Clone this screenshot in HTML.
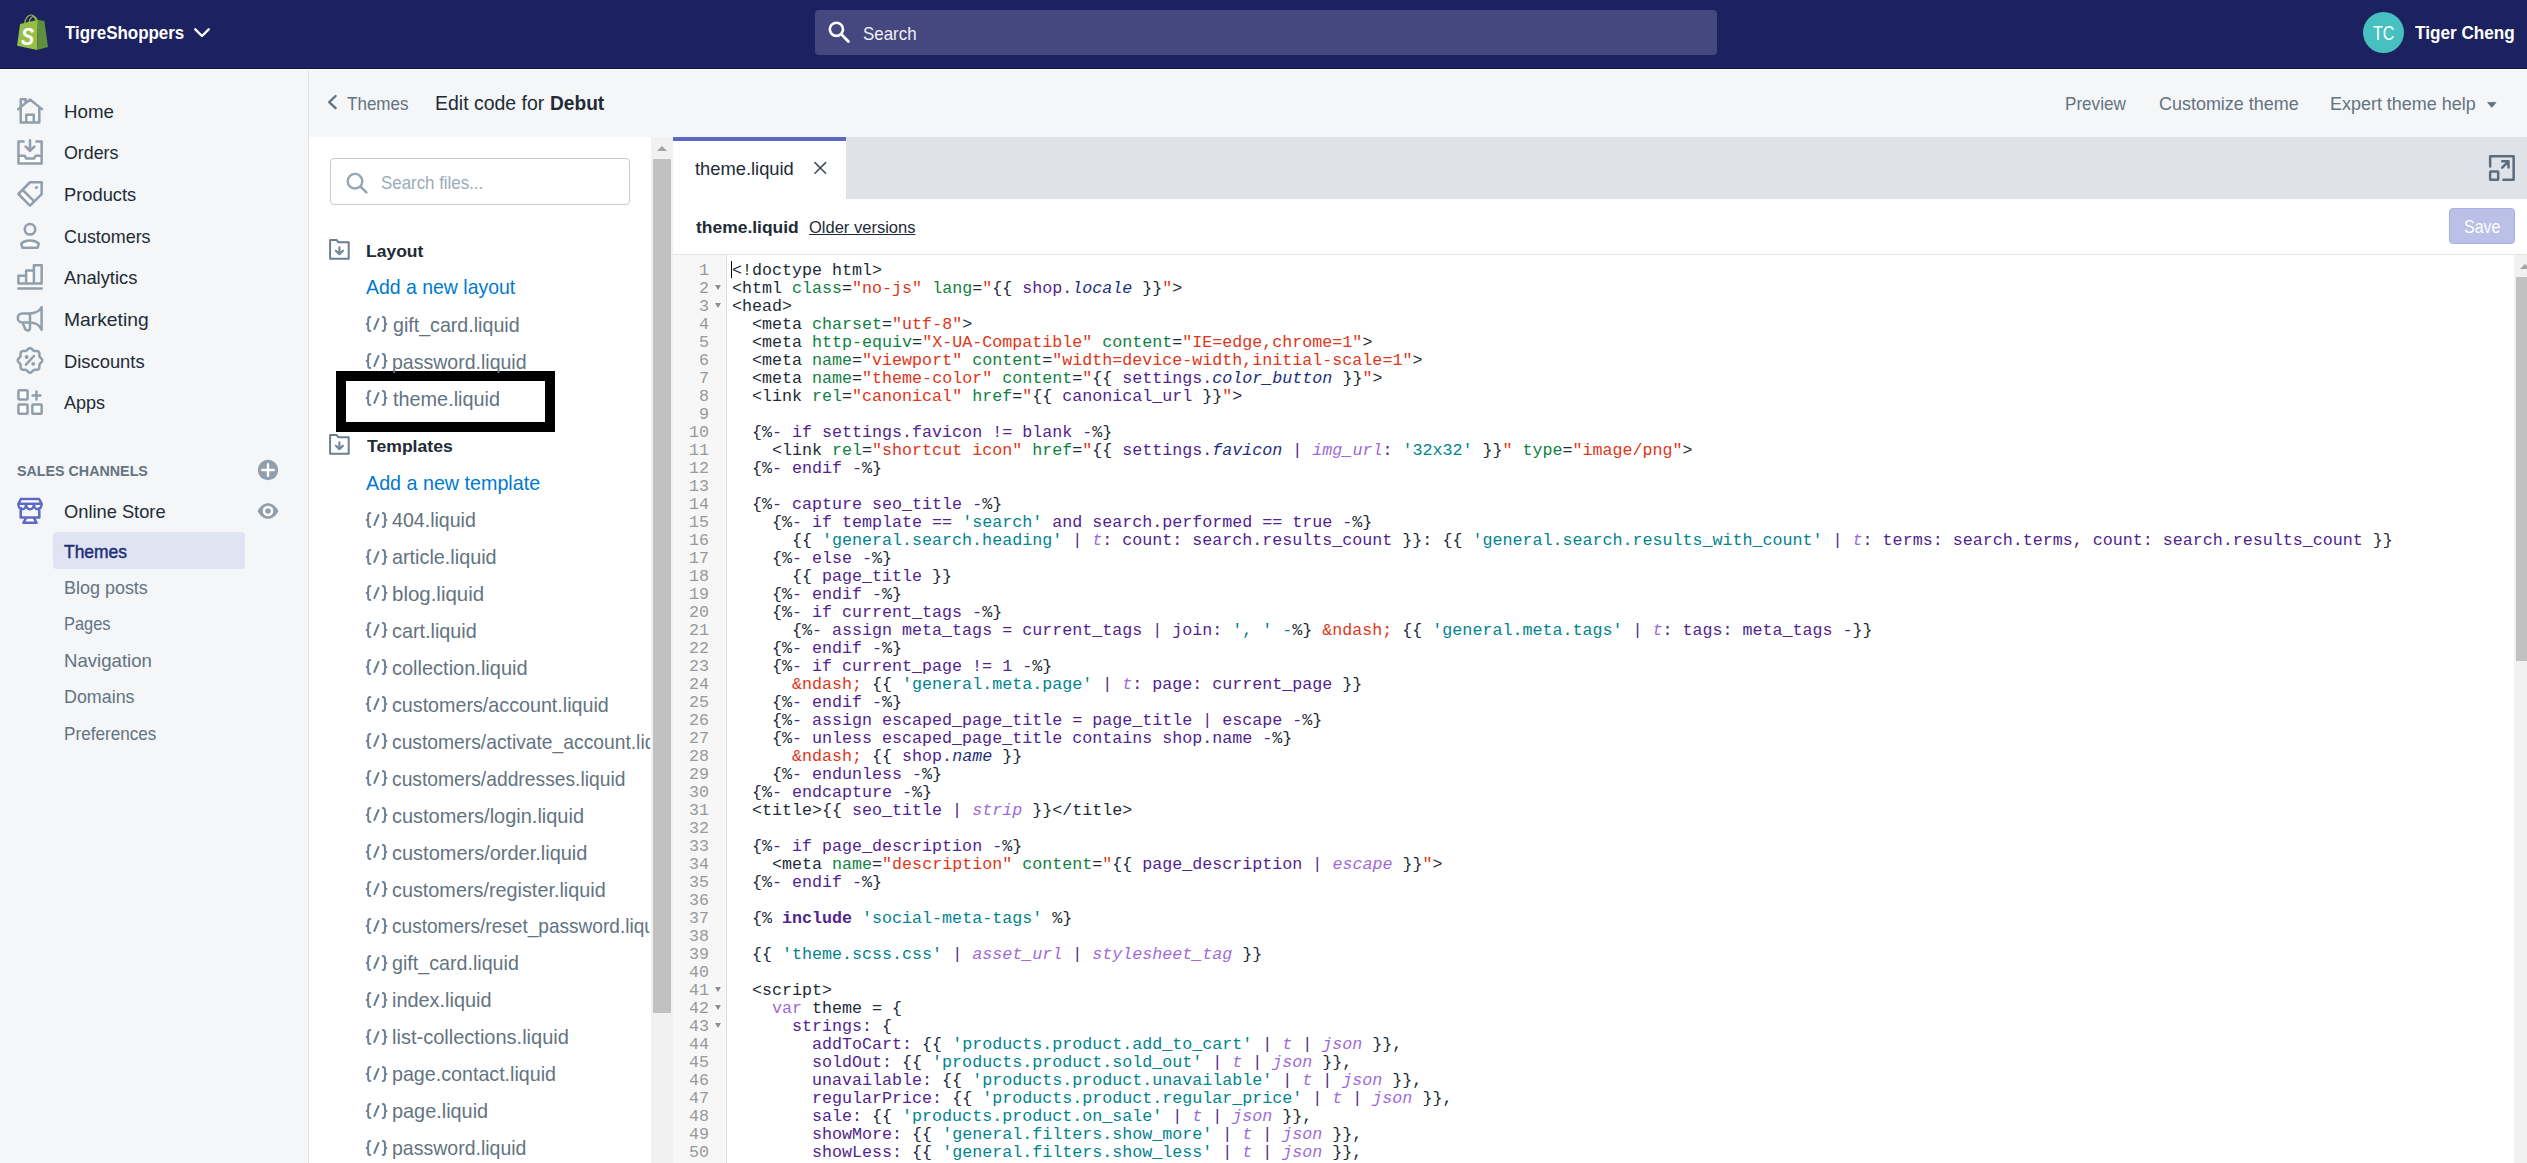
<!DOCTYPE html>
<html lang="en"><head><meta charset="utf-8"><title>TigreShoppers ~ Edit code for Debut</title>
<style>
html,body{margin:0;padding:0}
body{width:2527px;height:1163px;overflow:hidden;position:relative;background:#f4f6f8;font-family:"Liberation Sans", sans-serif;}
.bx{position:absolute}
.t{position:absolute;white-space:nowrap;transform-origin:0 50%;font-family:"Liberation Sans", sans-serif;}
.ic{position:absolute;overflow:visible}
#code{position:absolute;left:732px;top:262px;font-family:"Liberation Mono", monospace;font-size:16.687px;line-height:18px;color:#212b36;white-space:pre;}
#nums{position:absolute;left:673px;top:262px;width:36px;text-align:right;font-family:"Liberation Mono", monospace;font-size:16.687px;line-height:18px;color:#999;}
.cl,.ln{height:18px}
#code i{font-style:normal}
i.a{color:#108043} i.s{color:#de3618} i.l{color:#50248f} i.q{color:#00848e}
#code i.p{color:#202e78;font-style:italic} #code i.f{color:#9c6ade;font-style:italic}
i.v{color:#9c6ade} i.b{color:#50248f;font-weight:700}
.fold{position:absolute;left:715px;width:0;height:0;border-left:3.5px solid transparent;border-right:3.5px solid transparent;border-top:5px solid #8e8e8e}
</style></head><body>

<div class="bx" style="left:0;top:0;width:2527px;height:68px;background:#1c2260"></div>
<div class="bx" style="left:0;top:68px;width:2527px;height:1px;background:#0e1258"></div>
<div class="bx" style="left:0;top:69px;width:2527px;height:1px;background:#fff"></div>
<div class="bx" style="left:815px;top:10px;width:902px;height:45px;background:#45477f;border-radius:4px"></div>
<div class="bx" style="left:2363px;top:12px;width:41px;height:41px;border-radius:50%;background:#47c1bf"></div>
<div class="bx" style="left:308px;top:70px;width:1px;height:1093px;background:#dfe3e8"></div>
<div class="bx" style="left:53px;top:532px;width:192px;height:37px;background:#e0e3f1;border-radius:4px"></div>
<div class="bx" style="left:309px;top:137px;width:342px;height:1026px;background:#fff"></div>
<div class="bx" style="left:651px;top:137px;width:22px;height:1026px;background:#f1f1f1"></div>
<div class="bx" style="left:653px;top:159px;width:18px;height:854px;background:#c1c1c1"></div>
<div class="bx" style="left:657px;top:146px;width:0;height:0;border-left:5px solid transparent;border-right:5px solid transparent;border-bottom:5px solid #a3a3a3"></div>
<div class="bx" style="left:330px;top:158px;width:298px;height:45px;border:1px solid #c4cdd5;border-radius:4px;background:#fff"></div>
<div class="bx" style="left:336px;top:371px;width:199px;height:41px;border:10px solid #000;background:#fff"></div>
<div class="bx" style="left:673px;top:137px;width:1854px;height:62px;background:#dfe3e8"></div>
<div class="bx" style="left:673px;top:137px;width:173px;height:62px;background:#fff"></div>
<div class="bx" style="left:673px;top:137px;width:173px;height:4px;background:#5c6ac4"></div>
<div class="bx" style="left:673px;top:199px;width:1854px;height:55px;background:#fff"></div>
<div class="bx" style="left:673px;top:254px;width:1854px;height:1px;background:#e1e4e8"></div>
<div class="bx" style="left:673px;top:255px;width:1854px;height:908px;background:#fff"></div>
<div class="bx" style="left:673px;top:255px;width:53px;height:908px;background:#f7f7f7;border-right:1px solid #ddd"></div>
<div class="bx" style="left:2449px;top:208px;width:64px;height:34px;border:1px solid #a9b0e0;border-radius:4px;background:#bac0e6"></div>
<div class="bx" style="left:2514px;top:255px;width:13px;height:908px;background:#f1f1f1"></div>
<div class="bx" style="left:2516px;top:277px;width:11px;height:384px;background:#c1c1c1"></div>
<div class="bx" style="left:2520px;top:264px;width:0;height:0;border-left:5px solid transparent;border-right:5px solid transparent;border-bottom:5px solid #a3a3a3"></div>
<div class="bx" style="left:731px;top:261px;width:1px;height:17px;background:#000"></div>

<svg class="ic" style="left:13px;top:94px" width="36" height="36" viewBox="0 0 36 36"><rect x="13.25" y="20.75" width="7.5" height="7.7" fill="#fff" stroke="none"/>
<path fill="none" stroke="#919eab" stroke-width="2.5" stroke-linecap="round" stroke-linejoin="round" d="M7.75 13.5V28.45H26.3V13.5M5.2 15.1L17 5.5L28.9 15.1M7.75 12.6V5.25H12.65V8.3M13.25 28.45V20.75H20.75V28.45"/></svg><svg class="ic" style="left:13px;top:134px" width="36" height="36" viewBox="0 0 36 36"><path d="M5.45 21.7H11.5L13.2 24.5H21L22.7 21.7H28.65V29.55H5.45Z" fill="#fff"/>
<path fill="none" stroke="#919eab" stroke-width="2.5" stroke-linecap="round" stroke-linejoin="round" d="M10.6 7.45H5.45V29.55H28.65V7.45H23.4M5.45 21.7H11.5L13.2 24.5H21L22.7 21.7H28.65M17 6.3V16.2M12.6 12.6L17 16.9L21.4 12.6"/></svg><svg class="ic" style="left:13px;top:176px" width="36" height="36" viewBox="0 0 36 36"><path d="M9.55 13.85L5.4 18L17 29.6L21.2 25.5Z" fill="#fff"/>
<path fill="none" stroke="#919eab" stroke-width="2.5" stroke-linecap="round" stroke-linejoin="round" d="M17 6.25H28.65V18.2L17 29.6L5.4 18ZM9.8 14.1L20.9 25.2"/><circle cx="23.4" cy="11.5" r="1.5" fill="#919eab"/></svg><svg class="ic" style="left:13px;top:218px" width="36" height="36" viewBox="0 0 36 36"><path d="M9.4 29.7L8.2 25.6C13 21.6 21 21.6 25.8 25.6L24.6 29.7Z" fill="#fff"/>
<circle cx="17" cy="11.3" r="5.25" fill="none" stroke="#919eab" stroke-width="2.5" stroke-linecap="round" stroke-linejoin="round"/><path fill="none" stroke="#919eab" stroke-width="2.5" stroke-linecap="round" stroke-linejoin="round" d="M9.4 29.7L8.2 25.6C13 21.6 21 21.6 25.8 25.6L24.6 29.7Z"/></svg><svg class="ic" style="left:13px;top:259px" width="36" height="36" viewBox="0 0 36 36"><rect x="13.15" y="11.45" width="7.75" height="13" fill="#fff"/>
<path fill="none" stroke="#919eab" stroke-width="2.5" stroke-linecap="round" stroke-linejoin="round" d="M5.4 24.45V16.7H13.15V24.45M13.15 16.7V11.45H20.9V24.45M20.9 11.45V6.2H28.65V24.45H5.4M5.45 29.55H28.65"/></svg><svg class="ic" style="left:13px;top:301px" width="36" height="36" viewBox="0 0 36 36"><path fill="none" stroke="#919eab" stroke-width="2.5" stroke-linecap="round" stroke-linejoin="round" d="M28.6 6.3C26.4 10.6 21 12.4 17 12.4H9.3A4.5 4.5 0 0 0 9.3 21.4H17C21 21.4 26.4 23.4 28.6 28.6M28.6 6.3V28.7M17 12.4V27A2.4 2.4 0 0 1 14.6 29.4H14.2C13.2 29.4 12.6 28.9 12.2 28L9.5 21.6"/></svg><svg class="ic" style="left:13px;top:342px" width="36" height="36" viewBox="0 0 36 36"><path fill="none" stroke="#919eab" stroke-width="2.5" stroke-linecap="round" stroke-linejoin="round" d="M17.00 6.15L17.64 6.25L18.25 6.53L18.81 6.95L19.33 7.44L19.80 7.94L20.25 8.38L20.72 8.72L21.22 8.93L21.78 9.02L22.41 9.03L23.10 9.01L23.81 9.02L24.51 9.12L25.14 9.36L25.66 9.74L26.04 10.26L26.28 10.89L26.38 11.59L26.39 12.30L26.37 12.99L26.38 13.62L26.47 14.18L26.68 14.68L27.02 15.15L27.46 15.60L27.96 16.07L28.45 16.59L28.87 17.15L29.15 17.76L29.25 18.40L29.15 19.04L28.87 19.65L28.45 20.21L27.96 20.73L27.46 21.20L27.02 21.65L26.68 22.12L26.47 22.62L26.38 23.18L26.37 23.81L26.39 24.50L26.38 25.21L26.28 25.91L26.04 26.54L25.66 27.06L25.14 27.44L24.51 27.68L23.81 27.78L23.10 27.79L22.41 27.77L21.78 27.78L21.22 27.87L20.72 28.08L20.25 28.42L19.80 28.86L19.33 29.36L18.81 29.85L18.25 30.27L17.64 30.55L17.00 30.65L16.36 30.55L15.75 30.27L15.19 29.85L14.67 29.36L14.20 28.86L13.75 28.42L13.28 28.08L12.78 27.87L12.22 27.78L11.59 27.77L10.90 27.79L10.19 27.78L9.49 27.68L8.86 27.44L8.34 27.06L7.96 26.54L7.72 25.91L7.62 25.21L7.61 24.50L7.63 23.81L7.62 23.18L7.53 22.62L7.32 22.12L6.98 21.65L6.54 21.20L6.04 20.73L5.55 20.21L5.13 19.65L4.85 19.04L4.75 18.40L4.85 17.76L5.13 17.15L5.55 16.59L6.04 16.07L6.54 15.60L6.98 15.15L7.32 14.68L7.53 14.18L7.62 13.62L7.63 12.99L7.61 12.30L7.62 11.59L7.72 10.89L7.96 10.26L8.34 9.74L8.86 9.36L9.49 9.12L10.19 9.02L10.90 9.01L11.59 9.03L12.22 9.02L12.78 8.93L13.28 8.72L13.75 8.38L14.20 7.94L14.67 7.44L15.19 6.95L15.75 6.53L16.36 6.25L17.00 6.15Z"/><path fill="none" stroke="#919eab" stroke-width="2.5" stroke-linecap="round" stroke-linejoin="round" d="M12.9 22.7L21 14"/>
<circle cx="13.6" cy="15" r="1.9" fill="#919eab"/><circle cx="20.2" cy="21.8" r="1.9" fill="#919eab"/></svg><svg class="ic" style="left:13px;top:384px" width="36" height="36" viewBox="0 0 36 36"><g fill="#fff"  stroke="#919eab" stroke-width="2.5" stroke-linecap="round" stroke-linejoin="round"><rect x="5.45" y="6.2" width="9.1" height="9.25" rx="0.8"/><rect x="5.45" y="20.45" width="9.1" height="9.25" rx="0.8"/><rect x="19.35" y="20.45" width="9.3" height="9.25" rx="0.8"/></g>
<path fill="none" stroke="#919eab" stroke-width="2.5" stroke-linecap="round" stroke-linejoin="round" d="M19.6 11.5H27.4M23.45 7.4V15.6"/></svg><svg class="ic" style="left:13px;top:493px" width="36" height="36" viewBox="0 0 36 36"><path d="M7.9 6H26.1L28.7 10.8H5.3Z" fill="#fff"/><path d="M5.3 10.8A3.9 5.5 0 0 0 13.1 10.8A3.9 5.5 0 0 0 20.9 10.8A3.9 5.5 0 0 0 28.7 10.8Z" fill="#fff"/><path d="M13.3 24.5L10.5 29.8H23.5L20.8 24.5Z" fill="#fff"/>
<path fill="none" stroke="#5c6ac4" stroke-width="2.5" stroke-linecap="round" stroke-linejoin="round" d="M7.9 6H26.1L28.7 10.8H5.3ZM5.3 10.8A3.9 5.5 0 0 0 13.1 10.8A3.9 5.5 0 0 0 20.9 10.8A3.9 5.5 0 0 0 28.7 10.8M7.7 15V24.5H26.3V15M13.3 24.7L10.4 29.8H23.6L20.8 24.7"/></svg><svg class="ic" style="left:250px;top:452px" width="36" height="36" viewBox="0 0 36 36"><circle cx="18" cy="18" r="10.2" fill="#919eab"/><path d="M12.2 18H23.8M18 12.2V23.8" stroke="#fff" stroke-width="2.4" stroke-linecap="round"/></svg><svg class="ic" style="left:250px;top:493px" width="36" height="36" viewBox="0 0 36 36"><path d="M7.6 18C10 13 14 10.2 18 10.2S26 13 28.4 18C26 23 22 25.8 18 25.8S10 23 7.6 18Z" fill="#919eab"/><circle cx="18" cy="18" r="5.3" fill="#fff"/><circle cx="18" cy="18" r="2.8" fill="#919eab"/></svg><svg class="ic" style="left:190px;top:24px" width="24" height="18" viewBox="0 0 24 18"><path d="M5.3 5.3L12 12L18.7 5.3" fill="none" stroke="#fff" stroke-width="2.4" stroke-linecap="round" stroke-linejoin="round"/></svg><svg class="ic" style="left:824px;top:17px" width="30" height="30" viewBox="0 0 30 30"><circle cx="12.4" cy="12.3" r="6.6" fill="none" stroke="#fff" stroke-width="2.6"/><path d="M17.3 17.3L24.4 24.4" stroke="#fff" stroke-width="2.8" stroke-linecap="round"/></svg><svg class="ic" style="left:10px;top:8px" width="50" height="50" viewBox="0 0 50 50"><path d="M14.5 15.5C15.5 10 18.5 7 21 7C23.5 7 25 9.5 25.5 12" fill="none" stroke="#95bf47" stroke-width="1.2"/><path d="M18.8 15C19.8 10.8 21.8 8.4 23.8 8.6C25.6 8.8 26.6 10.6 27 12.4" fill="none" stroke="#95bf47" stroke-width="1.2"/>
<path d="M10.1 15.9L27.9 11.8L27.1 41.9L7.1 37.8Z" fill="#95bf47"/><path d="M27.9 11.8L34.4 12.9L38 38.9L27.1 41.9Z" fill="#5e8e3e"/>
<text transform="translate(10.9,36.8) scale(0.8,1)" font-family="Liberation Sans, sans-serif" font-weight="700" font-style="italic" font-size="24.5" fill="#fff">S</text></svg><svg class="ic" style="left:322px;top:90px" width="20" height="24" viewBox="0 0 20 24"><path d="M13.6 6L7.2 12.1L13.6 18.2" fill="none" stroke="#637381" stroke-width="2.3" stroke-linecap="round" stroke-linejoin="round"/></svg><svg class="ic" style="left:2484px;top:99px" width="16" height="12" viewBox="0 0 16 12"><path d="M3.6 3.4H12L7.8 8.4Z" fill="#637381" stroke="#637381" stroke-width="0.8" stroke-linejoin="round"/></svg><svg class="ic" style="left:342px;top:168px" width="30" height="30" viewBox="0 0 30 30"><circle cx="13" cy="13.2" r="7.3" fill="none" stroke="#95a7b7" stroke-width="2.4"/><path d="M18.6 18.8L24.4 24.4" stroke="#95a7b7" stroke-width="2.6" stroke-linecap="round"/></svg><svg class="ic" style="left:322px;top:232px" width="36" height="36" viewBox="0 0 36 36"><path d="M8.1 8H14.5L16.5 10.3H26.7V26.7H8.1Z" fill="none" stroke="#6b7f92" stroke-width="2" stroke-linejoin="round"/><path d="M17.4 15.4V22M13.9 18.7L17.4 22.2L20.9 18.7" fill="none" stroke="#7488a0" stroke-width="2.2" stroke-linecap="round" stroke-linejoin="round"/></svg><svg class="ic" style="left:322px;top:427px" width="36" height="36" viewBox="0 0 36 36"><path d="M8.1 8H14.5L16.5 10.3H26.7V26.7H8.1Z" fill="none" stroke="#6b7f92" stroke-width="2" stroke-linejoin="round"/><path d="M17.4 15.4V22M13.9 18.7L17.4 22.2L20.9 18.7" fill="none" stroke="#7488a0" stroke-width="2.2" stroke-linecap="round" stroke-linejoin="round"/></svg><svg class="ic" style="left:360px;top:308.0px" width="34" height="32" viewBox="0 0 34 32"><g fill="none" stroke="#6b7f92" stroke-width="2" stroke-linecap="round" stroke-linejoin="round"><path d="M10.3 9C8.5 9 8.2 10 8.2 11.5V14C8.2 15.3 7.6 15.9 6.7 15.9C7.6 15.9 8.2 16.5 8.2 17.8V20.5C8.2 22 8.5 23 10.3 23"/><path d="M22.8 9C24.6 9 24.9 10 24.9 11.5V14C24.9 15.3 25.5 15.9 26.4 15.9C25.5 15.9 24.9 16.5 24.9 17.8V20.5C24.9 22 24.6 23 22.8 23"/><path d="M14.3 21L18.5 11"/></g></svg><svg class="ic" style="left:360px;top:345.2px" width="34" height="32" viewBox="0 0 34 32"><g fill="none" stroke="#6b7f92" stroke-width="2" stroke-linecap="round" stroke-linejoin="round"><path d="M10.3 9C8.5 9 8.2 10 8.2 11.5V14C8.2 15.3 7.6 15.9 6.7 15.9C7.6 15.9 8.2 16.5 8.2 17.8V20.5C8.2 22 8.5 23 10.3 23"/><path d="M22.8 9C24.6 9 24.9 10 24.9 11.5V14C24.9 15.3 25.5 15.9 26.4 15.9C25.5 15.9 24.9 16.5 24.9 17.8V20.5C24.9 22 24.6 23 22.8 23"/><path d="M14.3 21L18.5 11"/></g></svg><svg class="ic" style="left:360px;top:382.4px" width="34" height="32" viewBox="0 0 34 32"><g fill="none" stroke="#6b7f92" stroke-width="2" stroke-linecap="round" stroke-linejoin="round"><path d="M10.3 9C8.5 9 8.2 10 8.2 11.5V14C8.2 15.3 7.6 15.9 6.7 15.9C7.6 15.9 8.2 16.5 8.2 17.8V20.5C8.2 22 8.5 23 10.3 23"/><path d="M22.8 9C24.6 9 24.9 10 24.9 11.5V14C24.9 15.3 25.5 15.9 26.4 15.9C25.5 15.9 24.9 16.5 24.9 17.8V20.5C24.9 22 24.6 23 22.8 23"/><path d="M14.3 21L18.5 11"/></g></svg><svg class="ic" style="left:360px;top:503.6px" width="34" height="32" viewBox="0 0 34 32"><g fill="none" stroke="#6b7f92" stroke-width="2" stroke-linecap="round" stroke-linejoin="round"><path d="M10.3 9C8.5 9 8.2 10 8.2 11.5V14C8.2 15.3 7.6 15.9 6.7 15.9C7.6 15.9 8.2 16.5 8.2 17.8V20.5C8.2 22 8.5 23 10.3 23"/><path d="M22.8 9C24.6 9 24.9 10 24.9 11.5V14C24.9 15.3 25.5 15.9 26.4 15.9C25.5 15.9 24.9 16.5 24.9 17.8V20.5C24.9 22 24.6 23 22.8 23"/><path d="M14.3 21L18.5 11"/></g></svg><svg class="ic" style="left:360px;top:540.54px" width="34" height="32" viewBox="0 0 34 32"><g fill="none" stroke="#6b7f92" stroke-width="2" stroke-linecap="round" stroke-linejoin="round"><path d="M10.3 9C8.5 9 8.2 10 8.2 11.5V14C8.2 15.3 7.6 15.9 6.7 15.9C7.6 15.9 8.2 16.5 8.2 17.8V20.5C8.2 22 8.5 23 10.3 23"/><path d="M22.8 9C24.6 9 24.9 10 24.9 11.5V14C24.9 15.3 25.5 15.9 26.4 15.9C25.5 15.9 24.9 16.5 24.9 17.8V20.5C24.9 22 24.6 23 22.8 23"/><path d="M14.3 21L18.5 11"/></g></svg><svg class="ic" style="left:360px;top:577.48px" width="34" height="32" viewBox="0 0 34 32"><g fill="none" stroke="#6b7f92" stroke-width="2" stroke-linecap="round" stroke-linejoin="round"><path d="M10.3 9C8.5 9 8.2 10 8.2 11.5V14C8.2 15.3 7.6 15.9 6.7 15.9C7.6 15.9 8.2 16.5 8.2 17.8V20.5C8.2 22 8.5 23 10.3 23"/><path d="M22.8 9C24.6 9 24.9 10 24.9 11.5V14C24.9 15.3 25.5 15.9 26.4 15.9C25.5 15.9 24.9 16.5 24.9 17.8V20.5C24.9 22 24.6 23 22.8 23"/><path d="M14.3 21L18.5 11"/></g></svg><svg class="ic" style="left:360px;top:614.42px" width="34" height="32" viewBox="0 0 34 32"><g fill="none" stroke="#6b7f92" stroke-width="2" stroke-linecap="round" stroke-linejoin="round"><path d="M10.3 9C8.5 9 8.2 10 8.2 11.5V14C8.2 15.3 7.6 15.9 6.7 15.9C7.6 15.9 8.2 16.5 8.2 17.8V20.5C8.2 22 8.5 23 10.3 23"/><path d="M22.8 9C24.6 9 24.9 10 24.9 11.5V14C24.9 15.3 25.5 15.9 26.4 15.9C25.5 15.9 24.9 16.5 24.9 17.8V20.5C24.9 22 24.6 23 22.8 23"/><path d="M14.3 21L18.5 11"/></g></svg><svg class="ic" style="left:360px;top:651.36px" width="34" height="32" viewBox="0 0 34 32"><g fill="none" stroke="#6b7f92" stroke-width="2" stroke-linecap="round" stroke-linejoin="round"><path d="M10.3 9C8.5 9 8.2 10 8.2 11.5V14C8.2 15.3 7.6 15.9 6.7 15.9C7.6 15.9 8.2 16.5 8.2 17.8V20.5C8.2 22 8.5 23 10.3 23"/><path d="M22.8 9C24.6 9 24.9 10 24.9 11.5V14C24.9 15.3 25.5 15.9 26.4 15.9C25.5 15.9 24.9 16.5 24.9 17.8V20.5C24.9 22 24.6 23 22.8 23"/><path d="M14.3 21L18.5 11"/></g></svg><svg class="ic" style="left:360px;top:688.3px" width="34" height="32" viewBox="0 0 34 32"><g fill="none" stroke="#6b7f92" stroke-width="2" stroke-linecap="round" stroke-linejoin="round"><path d="M10.3 9C8.5 9 8.2 10 8.2 11.5V14C8.2 15.3 7.6 15.9 6.7 15.9C7.6 15.9 8.2 16.5 8.2 17.8V20.5C8.2 22 8.5 23 10.3 23"/><path d="M22.8 9C24.6 9 24.9 10 24.9 11.5V14C24.9 15.3 25.5 15.9 26.4 15.9C25.5 15.9 24.9 16.5 24.9 17.8V20.5C24.9 22 24.6 23 22.8 23"/><path d="M14.3 21L18.5 11"/></g></svg><svg class="ic" style="left:360px;top:725.24px" width="34" height="32" viewBox="0 0 34 32"><g fill="none" stroke="#6b7f92" stroke-width="2" stroke-linecap="round" stroke-linejoin="round"><path d="M10.3 9C8.5 9 8.2 10 8.2 11.5V14C8.2 15.3 7.6 15.9 6.7 15.9C7.6 15.9 8.2 16.5 8.2 17.8V20.5C8.2 22 8.5 23 10.3 23"/><path d="M22.8 9C24.6 9 24.9 10 24.9 11.5V14C24.9 15.3 25.5 15.9 26.4 15.9C25.5 15.9 24.9 16.5 24.9 17.8V20.5C24.9 22 24.6 23 22.8 23"/><path d="M14.3 21L18.5 11"/></g></svg><svg class="ic" style="left:360px;top:762.18px" width="34" height="32" viewBox="0 0 34 32"><g fill="none" stroke="#6b7f92" stroke-width="2" stroke-linecap="round" stroke-linejoin="round"><path d="M10.3 9C8.5 9 8.2 10 8.2 11.5V14C8.2 15.3 7.6 15.9 6.7 15.9C7.6 15.9 8.2 16.5 8.2 17.8V20.5C8.2 22 8.5 23 10.3 23"/><path d="M22.8 9C24.6 9 24.9 10 24.9 11.5V14C24.9 15.3 25.5 15.9 26.4 15.9C25.5 15.9 24.9 16.5 24.9 17.8V20.5C24.9 22 24.6 23 22.8 23"/><path d="M14.3 21L18.5 11"/></g></svg><svg class="ic" style="left:360px;top:799.12px" width="34" height="32" viewBox="0 0 34 32"><g fill="none" stroke="#6b7f92" stroke-width="2" stroke-linecap="round" stroke-linejoin="round"><path d="M10.3 9C8.5 9 8.2 10 8.2 11.5V14C8.2 15.3 7.6 15.9 6.7 15.9C7.6 15.9 8.2 16.5 8.2 17.8V20.5C8.2 22 8.5 23 10.3 23"/><path d="M22.8 9C24.6 9 24.9 10 24.9 11.5V14C24.9 15.3 25.5 15.9 26.4 15.9C25.5 15.9 24.9 16.5 24.9 17.8V20.5C24.9 22 24.6 23 22.8 23"/><path d="M14.3 21L18.5 11"/></g></svg><svg class="ic" style="left:360px;top:836.06px" width="34" height="32" viewBox="0 0 34 32"><g fill="none" stroke="#6b7f92" stroke-width="2" stroke-linecap="round" stroke-linejoin="round"><path d="M10.3 9C8.5 9 8.2 10 8.2 11.5V14C8.2 15.3 7.6 15.9 6.7 15.9C7.6 15.9 8.2 16.5 8.2 17.8V20.5C8.2 22 8.5 23 10.3 23"/><path d="M22.8 9C24.6 9 24.9 10 24.9 11.5V14C24.9 15.3 25.5 15.9 26.4 15.9C25.5 15.9 24.9 16.5 24.9 17.8V20.5C24.9 22 24.6 23 22.8 23"/><path d="M14.3 21L18.5 11"/></g></svg><svg class="ic" style="left:360px;top:873.0px" width="34" height="32" viewBox="0 0 34 32"><g fill="none" stroke="#6b7f92" stroke-width="2" stroke-linecap="round" stroke-linejoin="round"><path d="M10.3 9C8.5 9 8.2 10 8.2 11.5V14C8.2 15.3 7.6 15.9 6.7 15.9C7.6 15.9 8.2 16.5 8.2 17.8V20.5C8.2 22 8.5 23 10.3 23"/><path d="M22.8 9C24.6 9 24.9 10 24.9 11.5V14C24.9 15.3 25.5 15.9 26.4 15.9C25.5 15.9 24.9 16.5 24.9 17.8V20.5C24.9 22 24.6 23 22.8 23"/><path d="M14.3 21L18.5 11"/></g></svg><svg class="ic" style="left:360px;top:909.94px" width="34" height="32" viewBox="0 0 34 32"><g fill="none" stroke="#6b7f92" stroke-width="2" stroke-linecap="round" stroke-linejoin="round"><path d="M10.3 9C8.5 9 8.2 10 8.2 11.5V14C8.2 15.3 7.6 15.9 6.7 15.9C7.6 15.9 8.2 16.5 8.2 17.8V20.5C8.2 22 8.5 23 10.3 23"/><path d="M22.8 9C24.6 9 24.9 10 24.9 11.5V14C24.9 15.3 25.5 15.9 26.4 15.9C25.5 15.9 24.9 16.5 24.9 17.8V20.5C24.9 22 24.6 23 22.8 23"/><path d="M14.3 21L18.5 11"/></g></svg><svg class="ic" style="left:360px;top:946.88px" width="34" height="32" viewBox="0 0 34 32"><g fill="none" stroke="#6b7f92" stroke-width="2" stroke-linecap="round" stroke-linejoin="round"><path d="M10.3 9C8.5 9 8.2 10 8.2 11.5V14C8.2 15.3 7.6 15.9 6.7 15.9C7.6 15.9 8.2 16.5 8.2 17.8V20.5C8.2 22 8.5 23 10.3 23"/><path d="M22.8 9C24.6 9 24.9 10 24.9 11.5V14C24.9 15.3 25.5 15.9 26.4 15.9C25.5 15.9 24.9 16.5 24.9 17.8V20.5C24.9 22 24.6 23 22.8 23"/><path d="M14.3 21L18.5 11"/></g></svg><svg class="ic" style="left:360px;top:983.82px" width="34" height="32" viewBox="0 0 34 32"><g fill="none" stroke="#6b7f92" stroke-width="2" stroke-linecap="round" stroke-linejoin="round"><path d="M10.3 9C8.5 9 8.2 10 8.2 11.5V14C8.2 15.3 7.6 15.9 6.7 15.9C7.6 15.9 8.2 16.5 8.2 17.8V20.5C8.2 22 8.5 23 10.3 23"/><path d="M22.8 9C24.6 9 24.9 10 24.9 11.5V14C24.9 15.3 25.5 15.9 26.4 15.9C25.5 15.9 24.9 16.5 24.9 17.8V20.5C24.9 22 24.6 23 22.8 23"/><path d="M14.3 21L18.5 11"/></g></svg><svg class="ic" style="left:360px;top:1020.76px" width="34" height="32" viewBox="0 0 34 32"><g fill="none" stroke="#6b7f92" stroke-width="2" stroke-linecap="round" stroke-linejoin="round"><path d="M10.3 9C8.5 9 8.2 10 8.2 11.5V14C8.2 15.3 7.6 15.9 6.7 15.9C7.6 15.9 8.2 16.5 8.2 17.8V20.5C8.2 22 8.5 23 10.3 23"/><path d="M22.8 9C24.6 9 24.9 10 24.9 11.5V14C24.9 15.3 25.5 15.9 26.4 15.9C25.5 15.9 24.9 16.5 24.9 17.8V20.5C24.9 22 24.6 23 22.8 23"/><path d="M14.3 21L18.5 11"/></g></svg><svg class="ic" style="left:360px;top:1057.7px" width="34" height="32" viewBox="0 0 34 32"><g fill="none" stroke="#6b7f92" stroke-width="2" stroke-linecap="round" stroke-linejoin="round"><path d="M10.3 9C8.5 9 8.2 10 8.2 11.5V14C8.2 15.3 7.6 15.9 6.7 15.9C7.6 15.9 8.2 16.5 8.2 17.8V20.5C8.2 22 8.5 23 10.3 23"/><path d="M22.8 9C24.6 9 24.9 10 24.9 11.5V14C24.9 15.3 25.5 15.9 26.4 15.9C25.5 15.9 24.9 16.5 24.9 17.8V20.5C24.9 22 24.6 23 22.8 23"/><path d="M14.3 21L18.5 11"/></g></svg><svg class="ic" style="left:360px;top:1094.64px" width="34" height="32" viewBox="0 0 34 32"><g fill="none" stroke="#6b7f92" stroke-width="2" stroke-linecap="round" stroke-linejoin="round"><path d="M10.3 9C8.5 9 8.2 10 8.2 11.5V14C8.2 15.3 7.6 15.9 6.7 15.9C7.6 15.9 8.2 16.5 8.2 17.8V20.5C8.2 22 8.5 23 10.3 23"/><path d="M22.8 9C24.6 9 24.9 10 24.9 11.5V14C24.9 15.3 25.5 15.9 26.4 15.9C25.5 15.9 24.9 16.5 24.9 17.8V20.5C24.9 22 24.6 23 22.8 23"/><path d="M14.3 21L18.5 11"/></g></svg><svg class="ic" style="left:360px;top:1131.58px" width="34" height="32" viewBox="0 0 34 32"><g fill="none" stroke="#6b7f92" stroke-width="2" stroke-linecap="round" stroke-linejoin="round"><path d="M10.3 9C8.5 9 8.2 10 8.2 11.5V14C8.2 15.3 7.6 15.9 6.7 15.9C7.6 15.9 8.2 16.5 8.2 17.8V20.5C8.2 22 8.5 23 10.3 23"/><path d="M22.8 9C24.6 9 24.9 10 24.9 11.5V14C24.9 15.3 25.5 15.9 26.4 15.9C25.5 15.9 24.9 16.5 24.9 17.8V20.5C24.9 22 24.6 23 22.8 23"/><path d="M14.3 21L18.5 11"/></g></svg><svg class="ic" style="left:808px;top:156px" width="24" height="24" viewBox="0 0 24 24"><path d="M7 6.6L17.6 17.2M17.6 6.6L7 17.2" stroke="#454f5b" stroke-width="1.6" stroke-linecap="round"/></svg><svg class="ic" style="left:2480px;top:148px" width="44" height="40" viewBox="0 0 44 40"><g fill="none" stroke="#5c6c7c" stroke-width="2.5" stroke-linecap="round" stroke-linejoin="round"><path d="M10.15 18.6V8.3H33.65V31.75H23.4"/><rect x="10.15" y="23.6" width="8.05" height="8.15" rx="0.6"/><path d="M22.2 19.6L28.4 13.3M22.2 13.2H28.5V19.6"/></g></svg>
<div class="t" style="left:64.70px;top:20.00px;font-size:18.97px;line-height:25px;color:#ffffff;transform:scaleX(0.8942);font-weight:700;">TigreShoppers</div><div class="t" style="left:862.70px;top:21.00px;font-size:18.34px;line-height:25px;color:#ffffff;transform:scaleX(0.9230);opacity:.92;">Search</div><div class="t" style="left:2372.90px;top:20.00px;font-size:19.56px;line-height:26px;color:#ffffff;transform:scaleX(0.8211);">TC</div><div class="t" style="left:2415.30px;top:20.00px;font-size:19.17px;line-height:25px;color:#ffffff;transform:scaleX(0.8961);font-weight:700;">Tiger Cheng</div><div class="t" style="left:63.68px;top:99.00px;font-size:18.34px;line-height:25px;color:#212b36;transform:scaleX(1.0210);">Home</div><div class="t" style="left:64.30px;top:140.00px;font-size:18.34px;line-height:25px;color:#212b36;transform:scaleX(0.9723);">Orders</div><div class="t" style="left:63.70px;top:182.00px;font-size:18.34px;line-height:25px;color:#212b36;transform:scaleX(0.9991);">Products</div><div class="t" style="left:64.30px;top:224.00px;font-size:18.34px;line-height:25px;color:#212b36;transform:scaleX(0.9769);">Customers</div><div class="t" style="left:64.30px;top:265.00px;font-size:18.34px;line-height:25px;color:#212b36;transform:scaleX(1.0003);">Analytics</div><div class="t" style="left:63.65px;top:307.00px;font-size:18.34px;line-height:25px;color:#212b36;transform:scaleX(1.0520);">Marketing</div><div class="t" style="left:63.70px;top:349.00px;font-size:18.34px;line-height:25px;color:#212b36;transform:scaleX(1.0012);">Discounts</div><div class="t" style="left:64.30px;top:390.00px;font-size:18.34px;line-height:25px;color:#212b36;transform:scaleX(0.9829);">Apps</div><div class="t" style="left:17.00px;top:461.00px;font-size:14.67px;line-height:20px;color:#637381;transform:scaleX(0.9741);font-weight:700;">SALES CHANNELS</div><div class="t" style="left:64.30px;top:499.00px;font-size:18.34px;line-height:25px;color:#212b36;transform:scaleX(0.9972);">Online Store</div><div class="t" style="left:64.30px;top:539.00px;font-size:18.34px;line-height:25px;color:#202e78;transform:scaleX(0.9494);-webkit-text-stroke:0.45px #202e78;">Themes</div><div class="t" style="left:63.82px;top:575.00px;font-size:18.34px;line-height:25px;color:#637381;transform:scaleX(0.9796);">Blog posts</div><div class="t" style="left:63.80px;top:611.00px;font-size:18.34px;line-height:25px;color:#637381;transform:scaleX(0.8956);">Pages</div><div class="t" style="left:63.68px;top:648.00px;font-size:18.34px;line-height:25px;color:#637381;transform:scaleX(1.0153);">Navigation</div><div class="t" style="left:63.72px;top:684.00px;font-size:18.34px;line-height:25px;color:#637381;transform:scaleX(0.9753);">Domains</div><div class="t" style="left:63.77px;top:721.00px;font-size:18.34px;line-height:25px;color:#637381;transform:scaleX(0.9349);">Preferences</div><div class="t" style="left:346.90px;top:91.00px;font-size:18.34px;line-height:25px;color:#637381;transform:scaleX(0.9297);">Themes</div><div class="t" style="left:434.70px;top:90.00px;font-size:19.56px;line-height:26px;color:#212b36;transform:scaleX(0.9960);">Edit code for</div><div class="t" style="left:550.02px;top:90.00px;font-size:19.56px;line-height:26px;color:#212b36;transform:scaleX(0.9787);font-weight:700;">Debut</div><div class="t" style="left:2065.47px;top:91.00px;font-size:18.34px;line-height:25px;color:#637381;transform:scaleX(0.9330);">Preview</div><div class="t" style="left:2158.70px;top:91.00px;font-size:18.34px;line-height:25px;color:#637381;transform:scaleX(0.9795);">Customize theme</div><div class="t" style="left:2329.62px;top:91.00px;font-size:18.34px;line-height:25px;color:#637381;transform:scaleX(0.9793);">Expert theme help</div><div class="t" style="left:381.20px;top:170.00px;font-size:18.34px;line-height:25px;color:#9aabbb;transform:scaleX(0.9205);">Search files...</div><div class="t" style="left:365.98px;top:240.00px;font-size:17.11px;line-height:23px;color:#212b36;transform:scaleX(1.0220);font-weight:700;">Layout</div><div class="t" style="left:366.10px;top:274.00px;font-size:19.56px;line-height:26px;color:#007ace;transform:scaleX(0.9951);">Add a new layout</div><div class="t" style="left:367.00px;top:435.00px;font-size:17.11px;line-height:23px;color:#212b36;transform:scaleX(1.0285);font-weight:700;">Templates</div><div class="t" style="left:366.10px;top:470.00px;font-size:19.56px;line-height:26px;color:#007ace;transform:scaleX(1.0076);">Add a new template</div><div class="t" style="left:392.50px;top:312.00px;font-size:19.56px;line-height:26px;color:#637381;transform:scaleX(1.0042);">gift_card.liquid</div><div class="t" style="left:392.00px;top:349.00px;font-size:19.56px;line-height:26px;color:#637381;transform:scaleX(0.9988);">password.liquid</div><div class="t" style="left:392.50px;top:386.00px;font-size:19.56px;line-height:26px;color:#637381;transform:scaleX(1.0150);">theme.liquid</div><div class="t" style="left:392.30px;top:507.00px;font-size:19.56px;line-height:26px;color:#637381;transform:scaleX(1.0022);">404.liquid</div><div class="t" style="left:392.30px;top:544.00px;font-size:19.56px;line-height:26px;color:#637381;transform:scaleX(1.0133);">article.liquid</div><div class="t" style="left:391.85px;top:581.00px;font-size:19.56px;line-height:26px;color:#637381;transform:scaleX(1.0469);">blog.liquid</div><div class="t" style="left:392.30px;top:618.00px;font-size:19.56px;line-height:26px;color:#637381;transform:scaleX(1.0123);">cart.liquid</div><div class="t" style="left:392.30px;top:655.00px;font-size:19.56px;line-height:26px;color:#637381;transform:scaleX(1.0229);">collection.liquid</div><div class="t" style="left:392.30px;top:692.00px;font-size:19.56px;line-height:26px;color:#637381;transform:scaleX(1.0077);">customers/account.liquid</div><div class="t" style="left:392.30px;top:729.00px;font-size:19.56px;line-height:26px;color:#637381;transform:scaleX(0.9855);width:261.50px;overflow:hidden;">customers/activate_account.liquid</div><div class="t" style="left:392.30px;top:766.00px;font-size:19.56px;line-height:26px;color:#637381;transform:scaleX(0.9857);">customers/addresses.liquid</div><div class="t" style="left:392.30px;top:803.00px;font-size:19.56px;line-height:26px;color:#637381;transform:scaleX(1.0215);">customers/login.liquid</div><div class="t" style="left:392.30px;top:840.00px;font-size:19.56px;line-height:26px;color:#637381;transform:scaleX(1.0219);">customers/order.liquid</div><div class="t" style="left:392.30px;top:877.00px;font-size:19.56px;line-height:26px;color:#637381;transform:scaleX(1.0139);">customers/register.liquid</div><div class="t" style="left:392.30px;top:913.00px;font-size:19.56px;line-height:26px;color:#637381;transform:scaleX(0.9758);width:264.08px;overflow:hidden;">customers/reset_password.liquid</div><div class="t" style="left:392.30px;top:950.00px;font-size:19.56px;line-height:26px;color:#637381;transform:scaleX(1.0066);">gift_card.liquid</div><div class="t" style="left:391.88px;top:987.00px;font-size:19.56px;line-height:26px;color:#637381;transform:scaleX(1.0174);">index.liquid</div><div class="t" style="left:391.88px;top:1024.00px;font-size:19.56px;line-height:26px;color:#637381;transform:scaleX(1.0242);">list-collections.liquid</div><div class="t" style="left:391.89px;top:1061.00px;font-size:19.56px;line-height:26px;color:#637381;transform:scaleX(1.0060);">page.contact.liquid</div><div class="t" style="left:391.88px;top:1098.00px;font-size:19.56px;line-height:26px;color:#637381;transform:scaleX(1.0163);">page.liquid</div><div class="t" style="left:391.90px;top:1135.00px;font-size:19.56px;line-height:26px;color:#637381;transform:scaleX(0.9981);">password.liquid</div><div class="t" style="left:694.60px;top:156.00px;font-size:18.34px;line-height:25px;color:#212b36;transform:scaleX(0.9997);">theme.liquid</div><div class="t" style="left:696.10px;top:216.00px;font-size:17.11px;line-height:23px;color:#212b36;transform:scaleX(1.0199);font-weight:700;">theme.liquid</div><div class="t" style="left:809.30px;top:217.00px;font-size:15.89px;line-height:21px;color:#212b36;transform:scaleX(1.0400);text-decoration:underline;text-underline-offset:1px;text-decoration-thickness:1px;">Older versions</div><div class="t" style="left:2464.30px;top:214.00px;font-size:18.34px;line-height:25px;color:#ffffff;transform:scaleX(0.8730);">Save</div>
<div id="nums"><div class="ln">1</div><div class="ln">2</div><div class="ln">3</div><div class="ln">4</div><div class="ln">5</div><div class="ln">6</div><div class="ln">7</div><div class="ln">8</div><div class="ln">9</div><div class="ln">10</div><div class="ln">11</div><div class="ln">12</div><div class="ln">13</div><div class="ln">14</div><div class="ln">15</div><div class="ln">16</div><div class="ln">17</div><div class="ln">18</div><div class="ln">19</div><div class="ln">20</div><div class="ln">21</div><div class="ln">22</div><div class="ln">23</div><div class="ln">24</div><div class="ln">25</div><div class="ln">26</div><div class="ln">27</div><div class="ln">28</div><div class="ln">29</div><div class="ln">30</div><div class="ln">31</div><div class="ln">32</div><div class="ln">33</div><div class="ln">34</div><div class="ln">35</div><div class="ln">36</div><div class="ln">37</div><div class="ln">38</div><div class="ln">39</div><div class="ln">40</div><div class="ln">41</div><div class="ln">42</div><div class="ln">43</div><div class="ln">44</div><div class="ln">45</div><div class="ln">46</div><div class="ln">47</div><div class="ln">48</div><div class="ln">49</div><div class="ln">50</div><div class="ln">51</div></div>
<div class="fold" style="top:285px"></div><div class="fold" style="top:303px"></div><div class="fold" style="top:987px"></div><div class="fold" style="top:1005px"></div><div class="fold" style="top:1023px"></div>
<div id="code"><div class="cl">&lt;!doctype html&gt;</div><div class="cl">&lt;html <i class="a">class</i>=<i class="s">"no-js" </i><i class="a">lang</i>=<i class="s">"</i>{{ <i class="l">shop.</i><i class="p">locale </i>}}<i class="s">"</i>&gt;</div><div class="cl">&lt;head&gt;</div><div class="cl">  &lt;meta <i class="a">charset</i>=<i class="s">"utf-8"</i>&gt;</div><div class="cl">  &lt;meta <i class="a">http-equiv</i>=<i class="s">"X-UA-Compatible" </i><i class="a">content</i>=<i class="s">"IE=edge,chrome=1"</i>&gt;</div><div class="cl">  &lt;meta <i class="a">name</i>=<i class="s">"viewport" </i><i class="a">content</i>=<i class="s">"width=device-width,initial-scale=1"</i>&gt;</div><div class="cl">  &lt;meta <i class="a">name</i>=<i class="s">"theme-color" </i><i class="a">content</i>=<i class="s">"</i>{{ <i class="l">settings.</i><i class="p">color_button </i>}}<i class="s">"</i>&gt;</div><div class="cl">  &lt;link <i class="a">rel</i>=<i class="s">"canonical" </i><i class="a">href</i>=<i class="s">"</i>{{ <i class="l">canonical_url </i>}}<i class="s">"</i>&gt;</div><div class="cl">&nbsp;</div><div class="cl">  {%<i class="l">- if settings.favicon != blank -</i>%}</div><div class="cl">    &lt;link <i class="a">rel</i>=<i class="s">"shortcut icon" </i><i class="a">href</i>=<i class="s">"</i>{{ <i class="l">settings.</i><i class="p">favicon </i><i class="l">| </i><i class="f">img_url</i><i class="l">: </i><i class="q">'32x32' </i>}}<i class="s">" </i><i class="a">type</i>=<i class="s">"image/png"</i>&gt;</div><div class="cl">  {%<i class="l">- endif -</i>%}</div><div class="cl">&nbsp;</div><div class="cl">  {%<i class="l">- capture seo_title -</i>%}</div><div class="cl">    {%<i class="l">- if template == </i><i class="q">'search' </i><i class="l">and search.performed == true -</i>%}</div><div class="cl">      {{ <i class="q">'general.search.heading' </i><i class="l">| </i><i class="f">t</i><i class="l">: count: search.results_count </i>}}: {{ <i class="q">'general.search.results_with_count' </i><i class="l">| </i><i class="f">t</i><i class="l">: terms: search.terms, count: search.results_count </i>}}</div><div class="cl">    {%<i class="l">- else -</i>%}</div><div class="cl">      {{ <i class="l">page_title </i>}}</div><div class="cl">    {%<i class="l">- endif -</i>%}</div><div class="cl">    {%<i class="l">- if current_tags -</i>%}</div><div class="cl">      {%<i class="l">- assign meta_tags = current_tags | join: </i><i class="q">', ' -</i>%} <i class="s">&amp;ndash; </i>{{ <i class="q">'general.meta.tags' </i><i class="l">| </i><i class="f">t</i><i class="l">: tags: meta_tags -</i>}}</div><div class="cl">    {%<i class="l">- endif -</i>%}</div><div class="cl">    {%<i class="l">- if current_page != 1 -</i>%}</div><div class="cl">      <i class="s">&amp;ndash; </i>{{ <i class="q">'general.meta.page' </i><i class="l">| </i><i class="f">t</i><i class="l">: page: current_page </i>}}</div><div class="cl">    {%<i class="l">- endif -</i>%}</div><div class="cl">    {%<i class="l">- assign escaped_page_title = page_title | escape -</i>%}</div><div class="cl">    {%<i class="l">- unless escaped_page_title contains shop.name -</i>%}</div><div class="cl">      <i class="s">&amp;ndash; </i>{{ <i class="l">shop.</i><i class="p">name </i>}}</div><div class="cl">    {%<i class="l">- endunless -</i>%}</div><div class="cl">  {%<i class="l">- endcapture -</i>%}</div><div class="cl">  &lt;title&gt;{{ <i class="l">seo_title | </i><i class="f">strip </i>}}&lt;/title&gt;</div><div class="cl">&nbsp;</div><div class="cl">  {%<i class="l">- if page_description -</i>%}</div><div class="cl">    &lt;meta <i class="a">name</i>=<i class="s">"description" </i><i class="a">content</i>=<i class="s">"</i>{{ <i class="l">page_description | </i><i class="f">escape </i>}}<i class="s">"</i>&gt;</div><div class="cl">  {%<i class="l">- endif -</i>%}</div><div class="cl">&nbsp;</div><div class="cl">  {% <i class="b">include </i><i class="q">'social-meta-tags' </i>%}</div><div class="cl">&nbsp;</div><div class="cl">  {{ <i class="q">'theme.scss.css' </i><i class="l">| </i><i class="f">asset_url </i><i class="l">| </i><i class="f">stylesheet_tag </i>}}</div><div class="cl">&nbsp;</div><div class="cl">  &lt;script&gt;</div><div class="cl">    <i class="v">var </i>theme = {</div><div class="cl">      <i class="l">strings: </i>{</div><div class="cl">        <i class="l">addToCart: </i>{{ <i class="q">'products.product.add_to_cart' </i><i class="l">| </i><i class="f">t </i><i class="l">| </i><i class="f">json </i>}},</div><div class="cl">        <i class="l">soldOut: </i>{{ <i class="q">'products.product.sold_out' </i><i class="l">| </i><i class="f">t </i><i class="l">| </i><i class="f">json </i>}},</div><div class="cl">        <i class="l">unavailable: </i>{{ <i class="q">'products.product.unavailable' </i><i class="l">| </i><i class="f">t </i><i class="l">| </i><i class="f">json </i>}},</div><div class="cl">        <i class="l">regularPrice: </i>{{ <i class="q">'products.product.regular_price' </i><i class="l">| </i><i class="f">t </i><i class="l">| </i><i class="f">json </i>}},</div><div class="cl">        <i class="l">sale: </i>{{ <i class="q">'products.product.on_sale' </i><i class="l">| </i><i class="f">t </i><i class="l">| </i><i class="f">json </i>}},</div><div class="cl">        <i class="l">showMore: </i>{{ <i class="q">'general.filters.show_more' </i><i class="l">| </i><i class="f">t </i><i class="l">| </i><i class="f">json </i>}},</div><div class="cl">        <i class="l">showLess: </i>{{ <i class="q">'general.filters.show_less' </i><i class="l">| </i><i class="f">t </i><i class="l">| </i><i class="f">json </i>}},</div><div class="cl">        <i class="l">addressError: </i>{{ <i class="q">'sections.map.address_error' </i><i class="l">| </i><i class="f">t </i><i class="l">| </i><i class="f">json </i>}},</div></div>
</body></html>
